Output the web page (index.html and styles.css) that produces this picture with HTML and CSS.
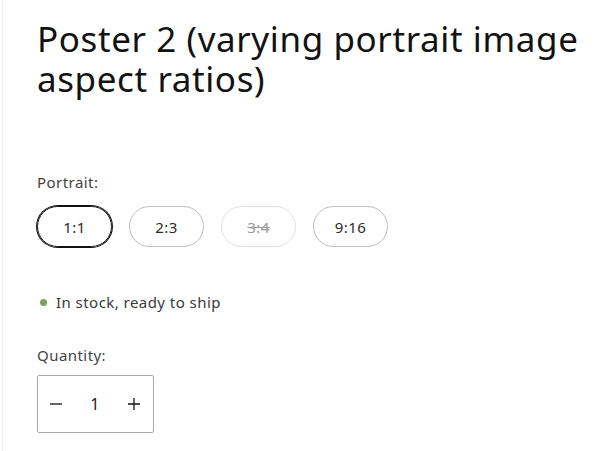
FILE: index.html
```html
<!DOCTYPE html>
<html lang="en">
<head>
<meta charset="utf-8">
<title>Poster 2</title>
<link rel="stylesheet" href="styles.css">
</head>
<body>
<div class="page">
  <main class="product">
    <h1 class="title">Poster 2 (varying portrait image aspect ratios)</h1>
    <fieldset class="variant">
      <legend class="label">Portrait:</legend>
      <div class="pills">
        <span class="pill selected">1:1</span>
        <span class="pill">2:3</span>
        <span class="pill disabled">3:4</span>
        <span class="pill">9:16</span>
      </div>
    </fieldset>
    <p class="stock"><span class="dot"></span>In stock, ready to ship</p>
    <div class="qty-block">
      <div class="label">Quantity:</div>
      <div class="qty">
        <span class="qbtn"><svg width="14" height="14" viewBox="0 0 14 14"><path d="M1 7h12" stroke="#121212" stroke-width="1.3"/></svg></span>
        <span class="qval">1</span>
        <span class="qbtn"><svg width="14" height="14" viewBox="0 0 14 14"><path d="M1 7h12M7 1v12" stroke="#121212" stroke-width="1.3"/></svg></span>
      </div>
    </div>
  </main>
</div>
</body>
</html>
```

FILE: styles.css
```css
html, body {
  margin: 0;
  padding: 0;
  background: #ffffff;
}
body {
  font-family: "Noto Sans", "Open Sans", sans-serif;
  color: #121212;
  letter-spacing: 0.45px;
}
.page {
  padding-left: 2px;
  min-height: 451px;
  box-sizing: border-box;
}
.product {
  border-left: 1px solid #ececec;
  min-height: 451px;
  padding: 19px 0 0 34px;
  box-sizing: border-box;
}
.title {
  margin: 0;
  font-size: 35px;
  font-weight: 400;
  line-height: 40px;
  letter-spacing: 0.6px;
  color: #121212;
}
.variant {
  border: 0;
  margin: 73px 0 0 0;
  padding: 0;
}
.label {
  padding: 0;
  font-size: 15px;
  line-height: 20px;
  color: #444444;
}
.pills {
  display: flex;
  gap: 17px;
  margin-top: 14px;
}
.pill {
  width: 75px;
  height: 41px;
  box-sizing: border-box;
  border: 1px solid #bdbdbd;
  border-radius: 21px;
  display: flex;
  align-items: center;
  justify-content: center;
  font-size: 15px;
  color: #2a2a2a;
}
.pill.selected {
  border: 1.5px solid #121212;
  box-shadow: 0 0 0 1px #121212;
}
.pill.disabled {
  border-color: #e0e0e0;
  color: #9a9a9a;
  text-decoration: line-through;
}
.stock {
  margin: 45px 0 0 0;
  display: flex;
  align-items: center;
  font-size: 15px;
  line-height: 20px;
  color: #3a3a3a;
}
.dot {
  width: 7px;
  height: 7px;
  border-radius: 50%;
  background: #7ba058;
  margin: 0 9px 0 3px;
}
.qty-block {
  margin-top: 33px;
}
.qty {
  margin-top: 10px;
  width: 117px;
  height: 58px;
  box-sizing: border-box;
  border: 1px solid #a8a8a8;
  border-radius: 2px;
  display: flex;
  align-items: center;
  justify-content: space-between;
  padding: 0 12px 0 11px;
}
.qbtn {
  display: flex;
  width: 14px;
  height: 14px;
}
.qval {
  font-size: 16px;
  color: #222;
}
```
